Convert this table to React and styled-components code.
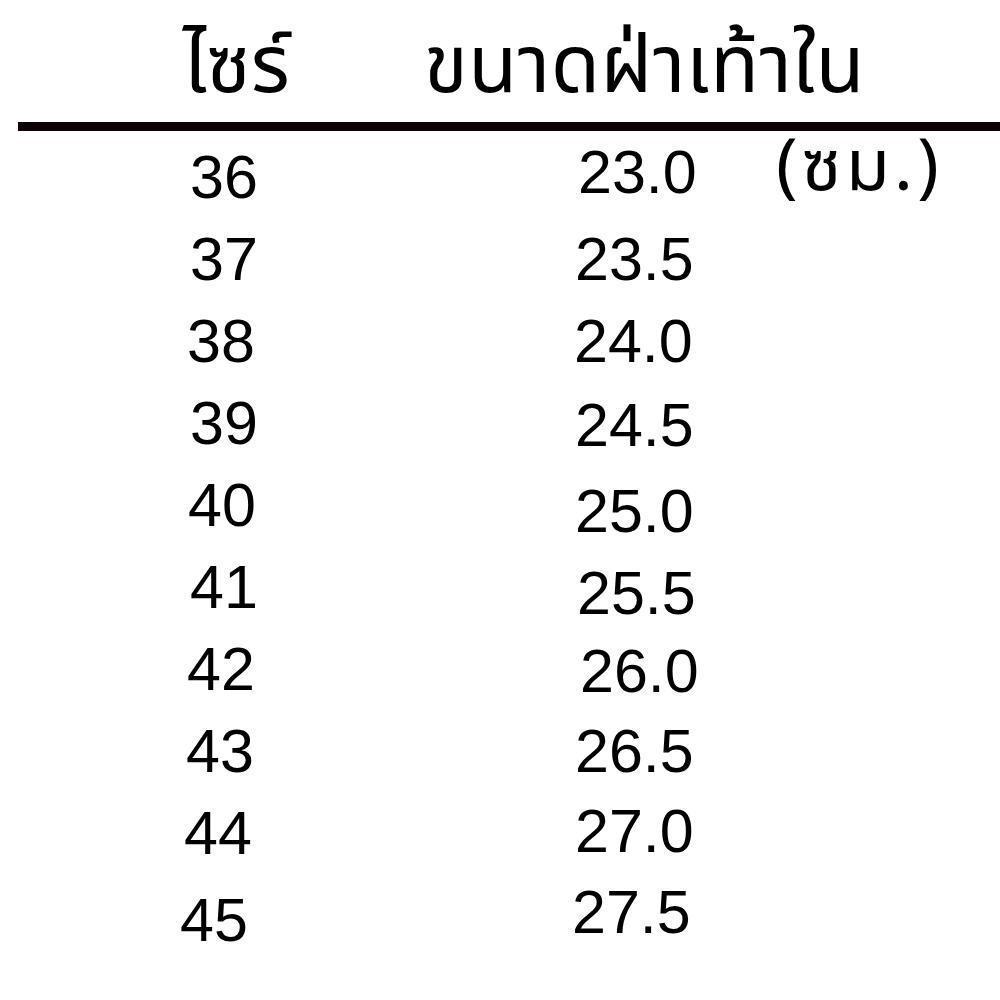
import React from "react";
import styled, { createGlobalStyle } from "styled-components";

const GlobalStyle = createGlobalStyle`
  html, body {
    margin: 0;
    padding: 0;
    background: #fff;
  }
  body {
    font-family: "Liberation Sans", "Noto Sans Thai", "Noto Sans", sans-serif;
    color: #000;
  }
`;

const Page = styled.div`
  width: 1000px;
  height: 1000px;
  overflow: hidden;
  background: #fff;
`;

const Header = styled.div`
  height: 122px;
  display: flex;
  align-items: flex-end;
  padding-left: 183px;
  column-gap: 134px;
  box-sizing: border-box;
  padding-bottom: 14px;
`;

const HeadText = styled.span`
  font-family: "Noto Sans Thai", "Liberation Sans", sans-serif;
  font-size: 80px;
  line-height: 1;
  letter-spacing: ${(p) => p.$spacing || 0}px;
`;

const Rule = styled.div`
  margin-left: 18px;
  height: 9px;
  background: #0d0203;
`;

const Table = styled.div`
  padding-top: 5px;
  display: grid;
  grid-template-columns: 390px 200px 1fr;
  grid-auto-rows: 82px;
`;

const Cell = styled.div`
  font-size: 61px;
  line-height: 82px;
  white-space: nowrap;
  padding-left: ${(p) => p.$x}px;
  transform: translateY(${(p) => p.$dy || 0}px);
`;

const Unit = styled.div`
  font-family: "Noto Sans Thai", "Liberation Sans", sans-serif;
  font-size: 72px;
  line-height: 82px;
  letter-spacing: 4px;
  white-space: nowrap;
  padding-left: 186px;
  transform: translateY(-9px);
`;

const rows = [
  { size: "36", len: "23.0", sx: 190, lx: 578, sdy: 0, ldy: -5 },
  { size: "37", len: "23.5", sx: 190, lx: 575, sdy: 0, ldy: 0 },
  { size: "38", len: "24.0", sx: 187, lx: 574, sdy: 0, ldy: 0 },
  { size: "39", len: "24.5", sx: 190, lx: 575, sdy: 0, ldy: 2 },
  { size: "40", len: "25.0", sx: 188, lx: 575, sdy: 0, ldy: 6 },
  { size: "41", len: "25.5", sx: 190, lx: 577, sdy: 0, ldy: 6 },
  { size: "42", len: "26.0", sx: 187, lx: 580, sdy: 0, ldy: 2 },
  { size: "43", len: "26.5", sx: 186, lx: 575, sdy: 0, ldy: 0 },
  { size: "44", len: "27.0", sx: 184, lx: 575, sdy: 0, ldy: -2 },
  { size: "45", len: "27.5", sx: 180, lx: 572, sdy: 5, ldy: -3 },
];

export default function App() {
  return (
    <Page>
      <GlobalStyle />
      <Header>
        <HeadText>ไซร์</HeadText>
        <HeadText $spacing={0.5}>ขนาดฝ่าเท้าใน</HeadText>
      </Header>
      <Rule />
      <Table>
        {rows.map((r, i) => (
          <React.Fragment key={r.size}>
            <Cell $x={r.sx} $dy={r.sdy}>{r.size}</Cell>
            <Cell $x={r.lx - 390} $dy={r.ldy}>{r.len}</Cell>
            {i === 0 ? <Unit>(ซม.)</Unit> : <div />}
          </React.Fragment>
        ))}
      </Table>
    </Page>
  );
}
